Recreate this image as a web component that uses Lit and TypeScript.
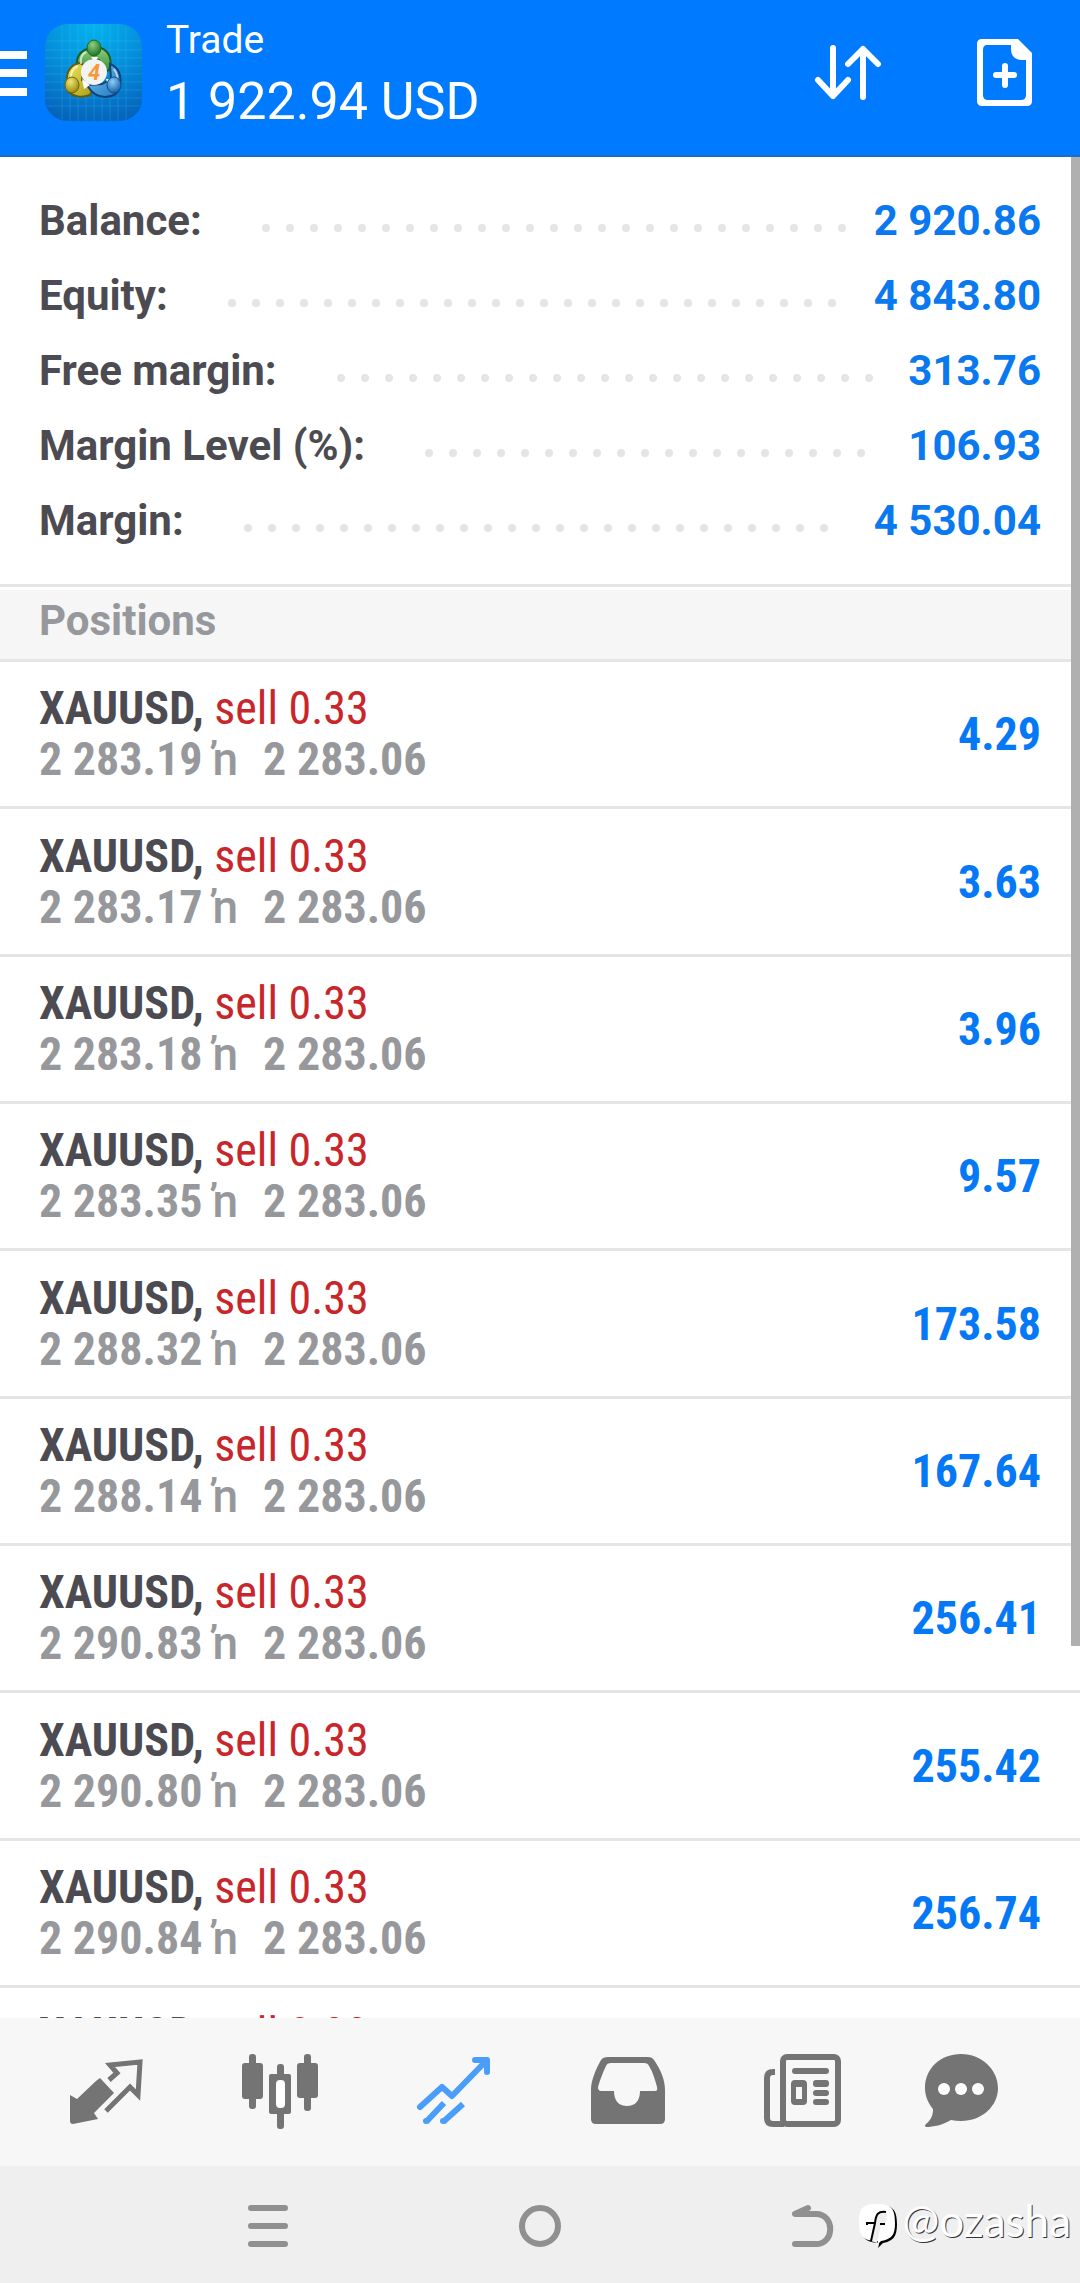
import { LitElement, html, css, svg } from "lit";
import { customElement, property } from "lit/decorators.js";

interface Position {
  symbol: string;
  side: string;
  volume: string;
  open: string;
  current: string;
  profit: string;
}

const SUMMARY: Array<[string, string]> = [
  ["Balance:", "2 920.86"],
  ["Equity:", "4 843.80"],
  ["Free margin:", "313.76"],
  ["Margin Level (%):", "106.93"],
  ["Margin:", "4 530.04"],
];

const POSITIONS: Position[] = [
  ["2 283.19", "4.29"],
  ["2 283.17", "3.63"],
  ["2 283.18", "3.96"],
  ["2 283.35", "9.57"],
  ["2 288.32", "173.58"],
  ["2 288.14", "167.64"],
  ["2 290.83", "256.41"],
  ["2 290.80", "255.42"],
  ["2 290.84", "256.74"],
  ["2 290.84", "256.74"],
].map(([open, profit]) => ({
  symbol: "XAUUSD",
  side: "sell",
  volume: "0.33",
  open,
  current: "2 283.06",
  profit,
}));

const TABS = [
  {
    label: "Quotes",
    icon: svg`
      <path d="M43 28 51 21 44 13 74 10 72 43 64 35 40 59" fill="none" stroke="currentColor" stroke-width="5" stroke-linecap="butt"/>
      <path d="M34 26 48 41 28 61 32 67 7 72Q4 72 4 69V43L11 47 30 29Z" fill="currentColor"/>`,
  },
  {
    label: "Charts",
    icon: svg`
      <g fill="currentColor">
        <rect x="2" y="11" width="21" height="36" rx="3"/><rect x="9" y="2" width="7" height="55" rx="3"/>
        <rect x="57" y="11" width="21" height="35" rx="3"/><rect x="64" y="2" width="7" height="57" rx="3"/>
        <rect x="29" y="22" width="22" height="40" rx="2"/><rect x="37" y="12" width="7" height="65" rx="3"/>
      </g>
      <rect x="36" y="28" width="9" height="28" rx="4" fill="#fff"/>`,
  },
  {
    label: "Trade",
    icon: svg`
      <g fill="none" stroke="currentColor" stroke-width="6" stroke-linecap="round" stroke-linejoin="round">
        <path d="M6 55 28 35 38 44 72 9"/><path d="M61 8H73V20"/>
      </g>
      <g fill="none" stroke="currentColor" stroke-width="6">
        <path d="M12 70 30 51M29 70 49 52"/>
      </g>
      <circle cx="12" cy="69" r="3" fill="currentColor"/><circle cx="29" cy="69" r="3" fill="currentColor"/>`,
  },
  {
    label: "History",
    icon: svg`
      <path fill="currentColor" fill-rule="evenodd" d="M20 5H60Q64 5 66 8C73 18 77 28 77 38V67Q77 72 72 72H8Q3 72 3 67V38C3 28 8 17 13 8Q15 5 20 5ZM23 11Q19 11 18 14C15 20 12 28 10 35Q10 39 13 39H26C26 49 31 54 39 54S52 49 52 39H67Q70 39 69 35C67 28 65 20 61 14Q60 11 56 11Z"/>`,
  },
  {
    label: "News",
    icon: svg`
      <g fill="none" stroke="currentColor" stroke-width="6">
        <rect x="21" y="5" width="55" height="67" rx="4"/>
        <path d="M13 20H11Q5 20 5 26V66Q5 72 11 72H22"/>
      </g>
      <g fill="currentColor">
        <rect x="30" y="16" width="37" height="6" rx="3"/>
        <path fill-rule="evenodd" d="M33 28H41Q45 28 45 32V49Q45 53 41 53H33Q29 53 29 49V32Q29 28 33 28ZM34 35V47H40V35Z"/>
        <rect x="51" y="28" width="16" height="7" rx="3"/><rect x="51" y="38" width="16" height="6" rx="3"/><rect x="51" y="47" width="16" height="6" rx="3"/>
      </g>`,
  },
  {
    label: "Messages",
    icon: svg`
      <path fill="currentColor" d="M39 2C60 2 76 18 76 36S60 69 39 69Q34 69 29 68C20 73 12 75 4 75Q2 74 4 72C10 67 11 62 11 57C6 51 3 44 3 36C3 16 19 2 39 2Z"/>
      <g fill="#fff"><circle cx="22" cy="37" r="6"/><circle cx="39" cy="37" r="6"/><circle cx="56" cy="37" r="6"/></g>`,
  },
];

/** Label and amount joined by a line of whole leader dots. */
@customElement("summary-row")
class SummaryRow extends LitElement {
  static styles = css`
    :host { display: block; }
    .row {
      display: flex;
      align-items: center;
      margin: 0;
      font-size: 42px;
      line-height: 75px;
      font-weight: 700;
      white-space: nowrap;
    }
    .label { color: #4c4b51; }
    .value { margin: 0; color: #0a78ee; }
    .leader {
      flex: 1;
      display: flex;
      flex-wrap: wrap;
      gap: 16px;
      height: 8px;
      overflow: hidden;
      margin: 14px 23px 0 60px;
    }
    .dot {
      width: 8px;
      height: 8px;
      border-radius: 50%;
      background: #e5e5e5;
    }
  `;

  @property() label = "";
  @property() value = "";

  render() {
    return html`
      <div class="row">
        <span class="label">${this.label}</span>
        <span class="leader" aria-hidden="true">
          ${Array.from({ length: 60 }, () => html`<span class="dot"></span>`)}
        </span>
        <span class="value">${this.value}</span>
      </div>
    `;
  }
}

@customElement("position-row")
class PositionRow extends LitElement {
  static styles = css`
    :host { display: block; }
    .row {
      display: flex;
      align-items: center;
      justify-content: space-between;
      padding: 21px 39px 21px 39px;
      font-family: "Roboto Condensed", "Liberation Sans Narrow", Roboto, sans-serif;
      font-size: 46px;
      line-height: 51px;
      font-weight: 700;
      white-space: nowrap;
    }
    .symbol { color: #4c4b51; }
    .order { color: #c8262a; font-weight: 400; }
    .prices { display: flex; color: #97989c; }
    .arrow {
      margin: 0 25px 0 10px;
      font-family: Roboto, sans-serif;
      font-weight: 500;
    }
    .profit { color: #0579f5; }
  `;

  @property({ attribute: false }) position!: Position;

  render() {
    const p = this.position;
    return html`
      <div class="row">
        <div class="details">
          <div class="title"><span class="symbol">${p.symbol},</span> <span class="order">${p.side} ${p.volume}</span></div>
          <div class="prices"><span>${p.open}</span><span class="arrow">ŉ</span><span>${p.current}</span></div>
        </div>
        <div class="profit">${p.profit}</div>
      </div>
    `;
  }
}

@customElement("app-root")
class AppRoot extends LitElement {
  static styles = css`
    :host {
      display: flex;
      flex-direction: column;
      height: 100vh;
      overflow: hidden;
      position: relative;
      background: #fff;
      font-family: Roboto, "Liberation Sans", sans-serif;
    }
    button {
      display: flex;
      align-items: center;
      justify-content: center;
      padding: 0;
      border: 0;
      background: none;
      color: inherit;
    }
    svg { display: block; }
    .header {
      flex: none;
      display: flex;
      align-items: center;
      padding: 0 35px 11px 0;
      border-bottom: 2px solid #1a6cc4;
      background: #007aff;
      color: #fff;
    }
    .logo { margin: 0 24px 0 18px; }
    .heading { flex: 1; padding: 11px 0 9px; white-space: nowrap; }
    .screen { margin: 0; font-size: 39px; line-height: 58px; font-weight: 400; }
    .total { margin: 0; font-size: 52px; line-height: 66px; }
    .actions { display: flex; gap: 77px; }
    .content { flex: 1; min-height: 0; position: relative; }
    .scroller { height: 100%; overflow-y: auto; scrollbar-width: none; }
    .thumb {
      position: absolute;
      top: 0;
      right: 0;
      width: 9px;
      height: 80%;
      background: #b0b0b0;
    }
    .summary { padding: 26px 39px; }
    .section {
      margin: 0;
      padding: 6px 39px 10px;
      border-top: 3px solid #e5e5e5;
      border-bottom: 3px solid #e5e5e5;
      background: #f6f6f6;
      box-shadow: inset 0 3px #fff;
      color: #97989c;
      font-size: 42px;
      line-height: 56px;
      font-weight: 700;
    }
    .positions { margin: 0; padding: 0; list-style: none; }
    .item { border-bottom: 3px solid #e5e5e5; }
    .item:nth-child(3n + 2) { padding-top: 1px; }
    .tabs {
      flex: none;
      display: grid;
      grid-template-columns: repeat(5, 174fr) 146fr;
      padding: 34px 45px 34px 19px;
      background: #f7f7f8;
      color: #747474;
    }
    .active { color: #4a9df8; }
    .system {
      flex: none;
      display: grid;
      grid-template-columns: repeat(3, 272px);
      justify-content: center;
      padding: 36px 0 33px;
      background: #efefef;
      color: #909090;
    }
    .watermark {
      position: absolute;
      right: 9px;
      bottom: 34px;
      display: flex;
      align-items: flex-start;
      gap: 4px;
      color: #fff;
      font-family: Lato, sans-serif;
      font-size: 44px;
      line-height: 38px;
      text-shadow: 1px 1px 0 #333;
    }
  `;

  private renderLogo() {
    return html`
      <svg class="logo" width="97" height="97" viewBox="0 0 97 97" aria-hidden="true">
        <defs>
          <radialGradient id="sky" cx=".5" cy="0" r="1">
            <stop offset="0" stop-color="#04b4ee"/><stop offset=".5" stop-color="#0590dc"/><stop offset="1" stop-color="#0565bd"/>
          </radialGradient>
          <linearGradient id="green" x1="0" y1="0" x2="0" y2="1"><stop offset="0" stop-color="#8fce7c"/><stop offset="1" stop-color="#2f8b2f"/></linearGradient>
          <linearGradient id="gold" x1="0" y1="0" x2="1" y2="1"><stop offset="0" stop-color="#efe95a"/><stop offset="1" stop-color="#a99a14"/></linearGradient>
          <linearGradient id="blue" x1="0" y1="0" x2="1" y2="1"><stop offset="0" stop-color="#7cc8f4"/><stop offset="1" stop-color="#1c74c0"/></linearGradient>
          <radialGradient id="headG" cx=".4" cy=".3" r=".7"><stop offset="0" stop-color="#8fd080"/><stop offset="1" stop-color="#1d7427"/></radialGradient>
          <radialGradient id="headY" cx=".4" cy=".3" r=".7"><stop offset="0" stop-color="#efe67a"/><stop offset="1" stop-color="#9a8a0c"/></radialGradient>
          <radialGradient id="headB" cx=".4" cy=".3" r=".7"><stop offset="0" stop-color="#8ccdf5"/><stop offset="1" stop-color="#1763ab"/></radialGradient>
        </defs>
        <rect width="97" height="97" rx="22" fill="url(#sky)"/>
        <path d="M17 2V95M25 0V97M33 0V97M41 0V97M49 0V97M57 0V97M65 0V97M73 0V97M81 2V95M2 17H95M0 26H97M0 34H97M0 42H97M0 50H97M0 58H97M0 66H97M0 74H97M2 82H95" stroke="#5ad0f4" stroke-opacity=".2" fill="none"/>
        <path d="M42 25C34 28 31 34 32 43L43 49 46 36H54L58 49 64 46C68 36 64 27 56 24Z" fill="url(#green)" stroke="#1b5f2a" stroke-width="2"/>
        <path d="M35 39C25 40 21 49 22 58L23 67C28 73 37 74 45 71L50 61 37 56 39 41Z" fill="url(#gold)" stroke="#5f5c16" stroke-width="2"/>
        <path d="M65 40C73 43 77 51 75 62 74 69 68 73 60 73 52 73 46 68 42 61L57 60 66 55Z" fill="url(#blue)" stroke="#0e4478" stroke-width="2"/>
        <path d="M37 55 45 61 39 65ZM61 55 67 55 64 64ZM46 33H53L50 38Z" fill="#fff"/>
        <path d="M26 57C25 49 28 44 33 42M69 45C73 50 73 56 71 60M36 40C35 34 37 30 41 28" stroke="#fff" stroke-opacity=".65" stroke-width="2" fill="none"/>
        <ellipse cx="49" cy="24" rx="7" ry="8" fill="url(#headG)" stroke="#1b6a2a"/>
        <ellipse cx="27" cy="61" rx="7" ry="8" fill="url(#headY)" stroke="#6b6510"/>
        <ellipse cx="69" cy="61" rx="7" ry="8" fill="url(#headB)" stroke="#124f8c"/>
        <circle cx="49" cy="48" r="13" fill="#f4f3f3"/>
        <text x="49" y="56" text-anchor="middle" font-family="Roboto, sans-serif" font-style="italic" font-weight="700" font-size="22" fill="#f59a3c">4</text>
      </svg>
    `;
  }

  render() {
    return html`
      <header class="header">
        <button aria-label="Menu">
          <svg width="27" height="48" viewBox="0 0 27 48" fill="#fff"><path d="M0 3H27V11H0ZM0 21H27V29H0ZM0 40H27V48H0Z"/></svg>
        </button>
        ${this.renderLogo()}
        <div class="heading">
          <h1 class="screen">Trade</h1>
          <p class="total">1 922.94 USD</p>
        </div>
        <div class="actions">
          <button aria-label="Sort">
            <svg width="80" height="80" viewBox="0 0 80 80" fill="none" stroke="#fff" stroke-width="6" stroke-linecap="round" stroke-linejoin="round">
              <path d="M25 16V64M10 48 25 64 40 48M55 65V17M40 32 55 17 70 32"/>
            </svg>
          </button>
          <button aria-label="New order">
            <svg width="80" height="80" viewBox="0 0 80 80">
              <path fill="#fff" fill-rule="evenodd" d="M17 7H53L67 21V69Q67 74 62 74H17Q12 74 12 69V12Q12 7 17 7ZM22 13Q18 13 18 18V63Q18 68 23 68H56Q61 68 61 63V28H56Q46 27 46 17V13Z"/>
              <path d="M31 43H49M40 34V53" stroke="#fff" stroke-width="6" stroke-linecap="round"/>
            </svg>
          </button>
        </div>
      </header>

      <main class="content">
        <div class="scroller">
          <section class="summary" aria-label="Account">
            ${SUMMARY.map(([label, value]) => html`<summary-row .label=${label} .value=${value}></summary-row>`)}
          </section>
          <h2 class="section">Positions</h2>
          <ul class="positions">
            ${POSITIONS.map((p) => html`<li class="item"><position-row .position=${p}></position-row></li>`)}
          </ul>
        </div>
        <div class="thumb"></div>
      </main>

      <nav class="tabs" aria-label="Sections">
        ${TABS.map(
          (t) => html`
            <button class=${t.label === "Trade" ? "active" : ""} aria-label=${t.label}>
              <svg width="80" height="80" viewBox="0 0 80 80">${t.icon}</svg>
            </button>
          `
        )}
      </nav>

      <nav class="system" aria-label="System">
        <button aria-label="Recent apps">
          <svg width="48" height="48" viewBox="0 0 48 48" stroke="currentColor" stroke-width="6" stroke-linecap="round"><path d="M7 6H41M7 24H41M7 42H41"/></svg>
        </button>
        <button aria-label="Home">
          <svg width="48" height="48" viewBox="0 0 48 48" stroke="currentColor" stroke-width="6" fill="none"><circle cx="24" cy="24" r="18"/></svg>
        </button>
        <button aria-label="Back">
          <svg width="48" height="48" viewBox="0 0 48 48" stroke="currentColor" stroke-width="6" fill="none" stroke-linecap="round" stroke-linejoin="round"><path d="M20 6 7 12H28C47 12 47 42 28 42H7"/></svg>
        </button>
      </nav>

      <div class="watermark">
        <svg width="40" height="48" viewBox="0 0 40 48" aria-hidden="true">
          <path d="M20 4C34 4 39 8 39 23 39 36 35 40 25 42L20 47C21 44 21 43 21 42 6 41 3 36 3 22 3 8 7 4 20 4Z" fill="#000"/>
          <path d="M19 3C33 3 37 7 37 22 37 34 34 38 23 40L18 45C20 42 20 41 20 40 5 40 1 35 1 21 1 7 5 3 19 3Z" fill="#fff"/>
          <path d="M17 23C19 14 20 12 29 12L28 22 23 24 19 42 13 40Z" fill="#efefef"/>
          <path d="M28 11C20 10 18 13 17 22H9V24M17 22 13 40M22 23H27" fill="none" stroke="#000" stroke-width="2"/>
        </svg>
        <span>@ozasha</span>
      </div>
    `;
  }
}
